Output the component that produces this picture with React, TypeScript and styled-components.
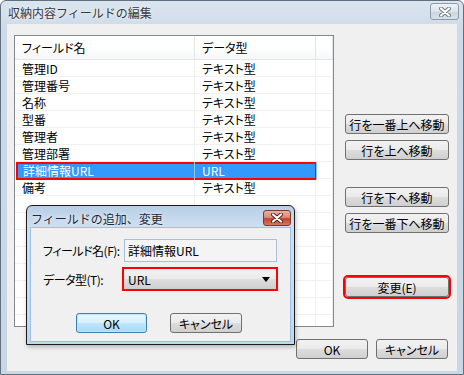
import React from 'react';
import styled, { createGlobalStyle, css } from 'styled-components';

const FONT = `"Noto Sans CJK JP", "Liberation Sans", sans-serif`;

const GlobalStyle = createGlobalStyle`
  html, body {
    margin: 0;
    padding: 0;
    background: #ffffff;
  }
  body {
    font-family: ${FONT};
    font-size: 12px;
    color: #000;
  }
  #root {
    width: 464px;
    height: 375px;
  }
`;

const Window = styled.div`
  box-sizing: border-box;
  width: 464px;
  height: 375px;
  display: flex;
  flex-direction: column;
  border: 1px solid #61707f;
  border-radius: 6px 6px 0 0;
  background: linear-gradient(#dbe5ef, #cddae7 30px, #c9d6e4);
  padding: 0 6px 3px 6px;
`;

const TitleBar = styled.div`
  height: 23px;
  display: flex;
  justify-content: space-between;
  align-items: flex-start;
`;

const Title = styled.span`
  padding: 4px 0 0 1px;
  font-size: 12px;
  line-height: 15px;
  color: #3a3a3a;
  text-shadow: 0 0 4px #fff;
`;

interface CloseProps {
  $active?: boolean;
}

const CloseButton = styled.div<CloseProps>`
  box-sizing: border-box;
  display: flex;
  align-items: center;
  justify-content: center;
  border-radius: 3px;
  ${(p) =>
    p.$active
      ? css`
          width: 28px;
          height: 16px;
          margin-top: 4px;
          border: 1px solid #7a3a2e;
          background: linear-gradient(#e7b0a2 0%, #d98c78 45%, #c5442b 55%, #d7755d 100%);
        `
      : css`
          width: 29px;
          height: 17px;
          margin-top: 2px;
          margin-right: -2px;
          border: 1px solid #8e9aa7;
          background: linear-gradient(#eef2f6 0%, #dde4eb 50%, #cdd6df 55%, #d8e0e8 100%);
        `}
`;

const Client = styled.div`
  flex: 1;
  position: relative;
  background: #f0f0f0;
  display: flex;
  flex-direction: column;
`;

const Body = styled.div`
  display: flex;
  gap: 11px;
  padding: 11px 0 0 7px;
`;

const ListView = styled.div`
  box-sizing: border-box;
  width: 320px;
  height: 292px;
  border: 1px solid #828790;
  background: #fff;
  overflow: hidden;
`;

const HeaderRow = styled.div`
  display: flex;
  height: 24px;
  box-sizing: border-box;
  border-bottom: 1px solid #e5e5e5;
  background: linear-gradient(#ffffff 0%, #ffffff 50%, #f6f7f9 100%);
`;

interface CellProps {
  $w?: number;
}

const HeaderCell = styled.div<CellProps>`
  box-sizing: border-box;
  ${(p) => (p.$w ? `width: ${p.$w}px;` : 'flex: 1;')}
  display: flex;
  align-items: center;
  padding-left: 7px;
  border-right: 1px solid #e3e5e8;
  font-feature-settings: "palt";
  line-height: 14px;
`;

const Row = styled.div`
  display: flex;
  height: 17px;
  box-sizing: border-box;
  border-bottom: 1px solid #f0f0f0;
`;

interface SelectProps {
  $selected?: boolean;
}

const Band = styled.div<SelectProps>`
  display: flex;
  width: 301px;
  ${(p) =>
    p.$selected &&
    css`
      background: #3399ff;
      color: #fff;
      box-shadow: inset 0 0 0 2px #ff0000;
      margin: 0 0 -2px 1px;
      width: 301px;
      height: 18px;
      position: relative;
    `}
`;

const Cell = styled.div<CellProps & SelectProps>`
  box-sizing: border-box;
  ${(p) => (p.$w ? `width: ${p.$w}px;` : 'flex: 1;')}
  padding: 1px 0 0 7px;
  line-height: 15px;
  white-space: nowrap;
  border-right: 1px solid ${(p) => (p.$selected ? '#8cc4ff' : '#f0f0f0')};
  font-feature-settings: "palt";
`;

const SideColumn = styled.div`
  display: flex;
  flex-direction: column;
  padding-top: 79px;
`;

interface ButtonProps {
  $w?: number;
  $top?: number;
  $default?: boolean;
  $marked?: boolean;
}

const Button = styled.button<ButtonProps>`
  box-sizing: border-box;
  width: ${(p) => p.$w ?? 104}px;
  height: 20px;
  margin-top: ${(p) => p.$top ?? 0}px;
  padding: 0;
  border: 1px solid #707070;
  border-radius: 3px;
  background: linear-gradient(#f2f2f2 0%, #ebebeb 48%, #dddddd 52%, #cfcfcf 100%);
  font-family: ${FONT};
  font-size: 12px;
  line-height: 17px;
  color: #000;
  white-space: nowrap;
  font-feature-settings: "palt";
  ${(p) =>
    p.$default &&
    css`
      border-color: #3c7fb1;
      box-shadow: inset 0 0 0 1px #bfe6f8;
      background: linear-gradient(#eaf6fd 0%, #d9f0fc 48%, #bee6fd 52%, #a7d9f5 100%);
    `}
  ${(p) =>
    p.$marked &&
    css`
      outline: 2px solid #ff0000;
      outline-offset: 0;
    `}
`;

const Footer = styled.div`
  display: flex;
  justify-content: flex-end;
  gap: 8px;
  padding: 12px 9px 0 0;
`;

const Dialog = styled.div`
  position: absolute;
  left: 19px;
  top: 181px;
  box-sizing: border-box;
  width: 269px;
  height: 140px;
  display: flex;
  flex-direction: column;
  padding: 0 3px 2px 3px;
  border: 1px solid #1c1c1c;
  border-radius: 6px 6px 0 0;
  background: linear-gradient(#b7cee6, #cfdff0 21px, #c3d7ec);
  box-shadow: 1px 2px 4px rgba(0, 0, 0, 0.25);
`;

const DialogTitleBar = styled.div`
  height: 21px;
  display: flex;
  justify-content: space-between;
  align-items: flex-start;
`;

const DialogTitle = styled.span`
  padding: 5px 0 0 1px;
  line-height: 15px;
  color: #1e2a38;
  text-shadow: 0 0 4px #fff;
`;

const DialogClient = styled.div`
  flex: 1;
  box-sizing: border-box;
  border: 1px solid #9dc1e4;
  background: #f0f0f0;
  padding: 11px 0 0 12px;
`;

const Form = styled.div`
  display: grid;
  grid-template-columns: 81px 153px;
  grid-template-rows: 23px 24px;
  row-gap: 5px;
  align-items: center;
`;

const Label = styled.span`
  line-height: 15px;
  white-space: nowrap;
  letter-spacing: -0.5px;
  font-feature-settings: "palt";
`;

const TextBox = styled.div`
  box-sizing: border-box;
  height: 23px;
  border: 1px solid #a9bfd6;
  background: #f4f4f4;
  padding: 3px 0 0 3px;
  line-height: 15px;
  font-feature-settings: "palt";
`;

const Combo = styled.div`
  box-sizing: border-box;
  width: 156px;
  height: 24px;
  margin-left: -2px;
  border: 2px solid #ff0000;
  background: linear-gradient(#f2f2f2 0%, #ebebeb 48%, #dddddd 52%, #cfcfcf 100%);
  display: flex;
  align-items: center;
  justify-content: space-between;
  padding: 0 6px 0 4px;
  line-height: 15px;
`;

const DialogButtons = styled.div`
  display: flex;
  gap: 23px;
  padding: 22px 0 0 33px;
`;

function CloseGlyph({ active }: { active?: boolean }) {
  return (
    <svg width="12" height="10" viewBox="0 0 12 10">
      <path
        d="M2 1.5 L10 8.5 M10 1.5 L2 8.5"
        stroke={active ? '#5a1d12' : '#6b7785'}
        strokeWidth="4"
        strokeLinecap="round"
      />
      <path d="M2 1.5 L10 8.5 M10 1.5 L2 8.5" stroke="#ffffff" strokeWidth="2.2" strokeLinecap="round" />
    </svg>
  );
}

const rows = [
  ['管理ID', 'テキスト型'],
  ['管理番号', 'テキスト型'],
  ['名称', 'テキスト型'],
  ['型番', 'テキスト型'],
  ['管理者', 'テキスト型'],
  ['管理部署', 'テキスト型'],
  ['詳細情報URL', 'URL'],
  ['備考', 'テキスト型'],
];

const SELECTED = 6;
const TOTAL_ROWS = 16;

export default function App() {
  const filled = [...rows, ...Array(TOTAL_ROWS - rows.length).fill(['', ''])];
  return (
    <>
      <GlobalStyle />
      <Window>
        <TitleBar>
          <Title>収納内容フィールドの編集</Title>
          <CloseButton>
            <CloseGlyph />
          </CloseButton>
        </TitleBar>
        <Client>
          <Body>
            <ListView>
              <HeaderRow>
                <HeaderCell $w={180}>フィールド名</HeaderCell>
                <HeaderCell $w={121}>データ型</HeaderCell>
                <HeaderCell />
              </HeaderRow>
              {filled.map(([name, type], i) => (
                <Row key={i}>
                  <Band $selected={i === SELECTED}>
                    <Cell $w={i === SELECTED ? 179 : 180} $selected={i === SELECTED}>
                      {name}
                    </Cell>
                    <Cell $w={i === SELECTED ? 122 : 121} $selected={i === SELECTED}>
                      {type}
                    </Cell>
                  </Band>
                  <Cell />
                </Row>
              ))}
            </ListView>
            <SideColumn>
              <Button>行を一番上へ移動</Button>
              <Button $top={6}>行を上へ移動</Button>
              <Button $top={27}>行を下へ移動</Button>
              <Button $top={6}>行を一番下へ移動</Button>
              <Button $top={44} $marked>
                変更(E)
              </Button>
            </SideColumn>
          </Body>
          <Footer>
            <Button $w={72}>OK</Button>
            <Button $w={72}>キャンセル</Button>
          </Footer>

          <Dialog>
            <DialogTitleBar>
              <DialogTitle>フィールドの追加、変更</DialogTitle>
              <CloseButton $active>
                <CloseGlyph active />
              </CloseButton>
            </DialogTitleBar>
            <DialogClient>
              <Form>
                <Label>フィールド名(F):</Label>
                <TextBox>詳細情報URL</TextBox>
                <Label>データ型(T):</Label>
                <Combo>
                  <span>URL</span>
                  <svg width="8" height="5" viewBox="0 0 8 5">
                    <path d="M0 0 H8 L4 5 Z" fill="#000" />
                  </svg>
                </Combo>
              </Form>
              <DialogButtons>
                <Button $w={71} $default>
                  OK
                </Button>
                <Button $w={72}>キャンセル</Button>
              </DialogButtons>
            </DialogClient>
          </Dialog>
        </Client>
      </Window>
    </>
  );
}
